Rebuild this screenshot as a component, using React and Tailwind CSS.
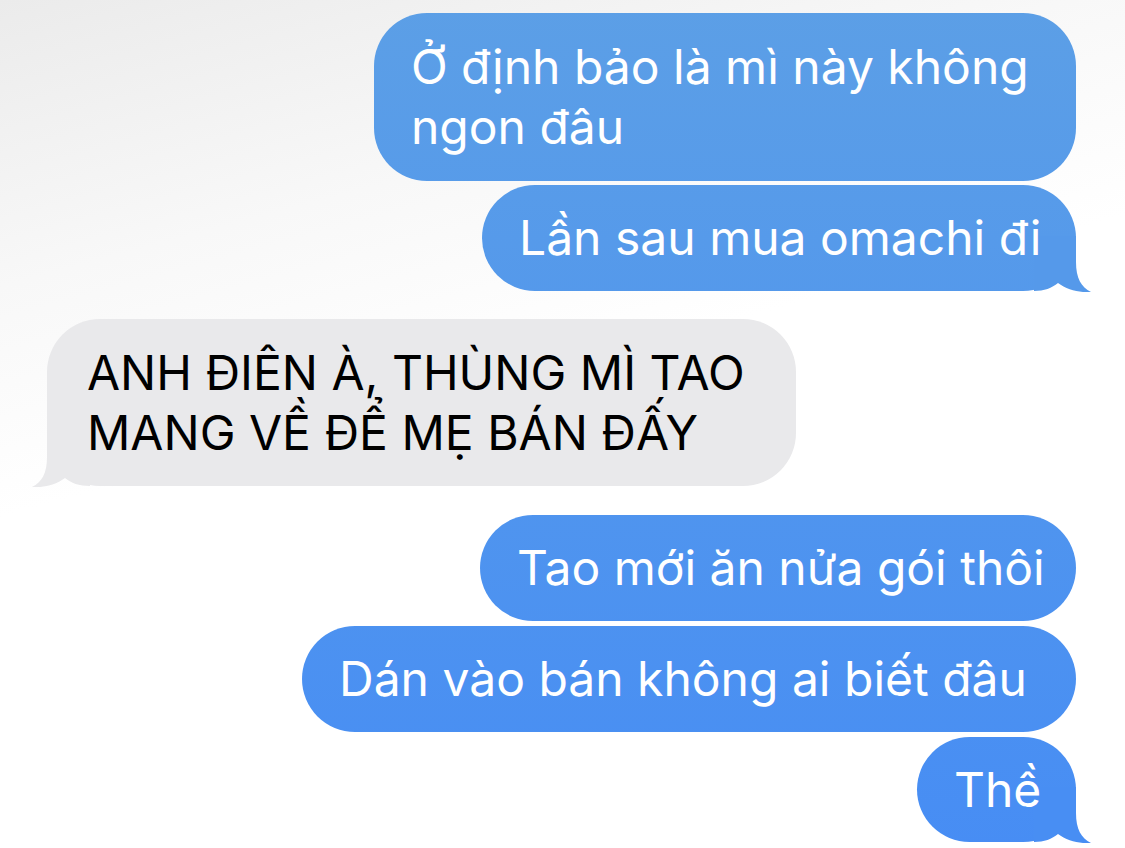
import React from 'react';

// iMessage style tail, drawn over the bottom corner of a bubble
const Tail = ({ side, fill }) => {
  if (side === 'right') {
    return (
      <svg
        className="absolute bottom-[-1px] right-[-16px]"
        width="58"
        height="56"
        viewBox="0 0 58 56"
      >
        <path
          d="M0,0 H42 V26 C42,42 47,51 57,56 C47,57 33,54 24,47 C18,52 10,55 0,55 Z"
          fill={fill}
        />
      </svg>
    );
  }
  return (
    <svg
      className="absolute bottom-[-1px] left-[-15px]"
      width="58"
      height="56"
      viewBox="0 0 58 56"
    >
      <path
        d="M58,0 H15 V26 C15,42 10,51 0,56 C10,57 24,54 33,47 C39,52 47,55 58,55 Z"
        fill={fill}
      />
    </svg>
  );
};

const Bubble = ({ side = 'right', tail, tailFill, size, children }) => {
  const mine = side === 'right';
  return (
    <div
      className={`relative ${size} shrink-0 flex flex-col justify-center rounded-[53px] pl-[37px] text-[48px] leading-[60px] whitespace-nowrap ${
        mine
          ? 'self-end bg-linear-to-b from-[#5c9fe6] to-[#478df4] bg-fixed text-white'
          : 'self-start bg-[#e9e9eb] text-black'
      }`}
    >
      {tail && <Tail side={side} fill={tailFill} />}
      <div className="relative">{children}</div>
    </div>
  );
};

const App = () => {
  return (
    <div className="w-[1125px] h-[848px] overflow-hidden bg-[linear-gradient(165deg,#ebebeb_0%,#f8f8f8_25%,#ffffff_45%)] font-['Inter','Noto_Sans',sans-serif]">
      <div className="flex flex-col pt-[13px] pl-[47px] pr-[49px]">
        <Bubble size="w-[702px] h-[168px]">
          Ở định bảo là mì này không
          <br />
          ngon đâu
        </Bubble>
        <div className="mt-[4px] flex flex-col">
          <Bubble size="w-[594px] h-[106px]" tail tailFill="#5599ea">
            Lần sau mua omachi đi
          </Bubble>
        </div>

        <div className="mt-[28px] flex flex-col">
          <Bubble side="left" size="w-[749px] h-[167px]" tail tailFill="#e9e9eb">
            <span className="pl-[3px]">ANH ĐIÊN À, THÙNG MÌ TAO</span>
            <br />
            <span className="pl-[3px]">MANG VỀ ĐỂ MẸ BÁN ĐẤY</span>
          </Bubble>
        </div>

        <div className="mt-[29px] flex flex-col gap-[5px]">
          <Bubble size="w-[596px] h-[106px]">Tao mới ăn nửa gói thôi</Bubble>
          <Bubble size="w-[774px] h-[106px]">Dán vào bán không ai biết đâu</Bubble>
          <Bubble size="w-[159px] h-[105px]" tail tailFill="#488ef3">
            Thề
          </Bubble>
        </div>
      </div>
    </div>
  );
};

export default App;
